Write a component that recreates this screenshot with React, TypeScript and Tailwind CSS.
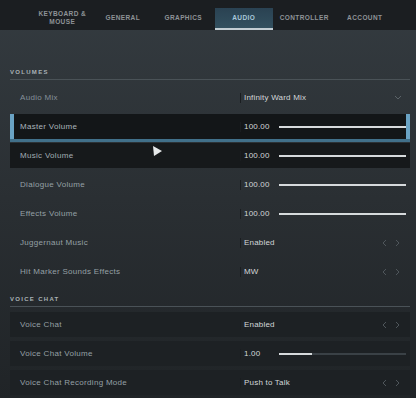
import { ReactNode } from 'react';

const tabs = ['KEYBOARD & MOUSE', 'GENERAL', 'GRAPHICS', 'AUDIO', 'CONTROLLER', 'ACCOUNT'];

const Arrows = () => (
    <svg width="18" height="8" viewBox="0 0 18 8" className="mr-[10px]">
        <path d="M4 1 L1 4 L4 7" fill="none" stroke="#4f565b" strokeWidth="1" />
        <path d="M14 1 L17 4 L14 7" fill="none" stroke="#4f565b" strokeWidth="1" />
    </svg>
);

const Slider = ({ pct, end = 4 }: { pct: number; end?: number }) => (
    <div className={`flex-1 h-[2px] bg-[#3a4146] relative ${end === 0 ? 'mr-0' : 'mr-[4px]'}`}>
        <div className="h-full bg-[#d6dadc]" style={{ width: `${pct}%` }} />
    </div>
);

interface RowProps {
    label: string;
    value: string;
    right?: ReactNode;
    className?: string;
    labelClass?: string;
}

const Row = ({ label, value, right, className = '', labelClass = 'text-[#95a0a5]' }: RowProps) => (
    <div className={`h-[25px] flex items-center relative ${className}`}>
        <span className={`w-[230px] pl-[10px] text-[8px] tracking-[0.3px] ${labelClass}`}>{label}</span>
        <span className="w-px h-[10px] bg-[#1a1d20]" />
        <span className="w-[38px] pl-[3px] text-[8px] tracking-[0.2px] text-[#d3d7d9] whitespace-nowrap">{value}</span>
        <div className="flex-1 flex items-center justify-end">{right}</div>
    </div>
);

const Heading = ({ children }: { children: ReactNode }) => (
    <div>
        <div className="h-[8px] flex items-center text-[6px] font-bold tracking-[1.3px] text-[#aab2b6]">{children}</div>
        <div className="mt-[3px] h-px bg-[#4a5257]" />
    </div>
);

export default function App() {
    return (
        <div
            className="w-[416px] h-[398px] overflow-hidden relative bg-gradient-to-b from-[#343b40] via-[#2a2f33] to-[#202427]"
            style={{ fontFamily: '"Liberation Sans", Arial, sans-serif' }}
        >
            <div className="h-[30px] bg-[#1b1e21] flex pl-[32px]">
                {tabs.map((t) => (
                    <div key={t} className="w-[60.5px] flex flex-col">
                        {t === 'AUDIO' ? (
                            <div className="mt-[8px] mx-[1px] h-[22px] flex flex-col">
                                <div className="flex-1 bg-gradient-to-b from-[#2a4252] to-[#33505f] flex items-center justify-center text-[6.5px] font-bold tracking-[0.4px] text-[#a9c8db]">
                                    AUDIO
                                </div>
                                <div className="h-[2px] bg-[#c3cdd3]" />
                            </div>
                        ) : (
                            <div className="h-full pt-[6px] flex items-center justify-center text-center text-[6.5px] leading-[8px] font-bold tracking-[0.4px] text-[#8e9397] px-[6px]">
                                {t}
                            </div>
                        )}
                    </div>
                ))}
            </div>

            <div className="pl-[10px] pr-[6px]">
                <div className="mt-[38px]">
                    <Heading>VOLUMES</Heading>
                </div>
                <div className="mt-[5px] flex flex-col gap-[4px]">
                    <Row
                        label="Audio Mix"
                        value="Infinity Ward Mix"
                        labelClass="text-[#85909a]"
                        right={
                            <svg width="8" height="5" viewBox="0 0 8 5" className="mr-[8px]">
                                <path d="M1 1 L4 4 L7 1" fill="none" stroke="#5b6368" strokeWidth="1" />
                            </svg>
                        }
                    />
                    <Row
                        label="Master Volume"
                        value="100.00"
                        labelClass="text-[#aab5bb]"
                        className="bg-[#131618] shadow-[0_3px_0_#41708a] border-l-4 border-l-[#6aa3c4] border-r-4 border-r-[#6aa3c4] [&>span:first-child]:pl-[6px] [&>span:first-child]:w-[226px]"
                        right={<Slider pct={100} end={0} />}
                    />
                    <Row label="Music Volume" value="100.00" labelClass="text-[#a2adb3]" className="bg-[#16191b]" right={<Slider pct={100} />} />
                    <Row label="Dialogue Volume" value="100.00" right={<Slider pct={100} />} />
                    <Row label="Effects Volume" value="100.00" right={<Slider pct={100} />} />
                    <Row label="Juggernaut Music" value="Enabled" right={<Arrows />} />
                    <Row label="Hit Marker Sounds Effects" value="MW" right={<Arrows />} />
                </div>

                <div className="mt-[11px]">
                    <Heading>VOICE CHAT</Heading>
                </div>
                <div className="mt-[5px] flex flex-col gap-[4px]">
                    <Row label="Voice Chat" value="Enabled" className="bg-[#1d2124]" right={<Arrows />} />
                    <Row label="Voice Chat Volume" value="1.00" className="bg-[#1d2124]" right={<Slider pct={26} />} />
                    <Row label="Voice Chat Recording Mode" value="Push to Talk" className="bg-[#1d2124]" right={<Arrows />} />
                </div>
            </div>

            <svg className="absolute left-[152px] top-[145px]" width="11" height="12" viewBox="0 0 11 12">
                <polygon points="1,1 10,6 2,11" fill="#e6e9ea" />
            </svg>
        </div>
    );
}
